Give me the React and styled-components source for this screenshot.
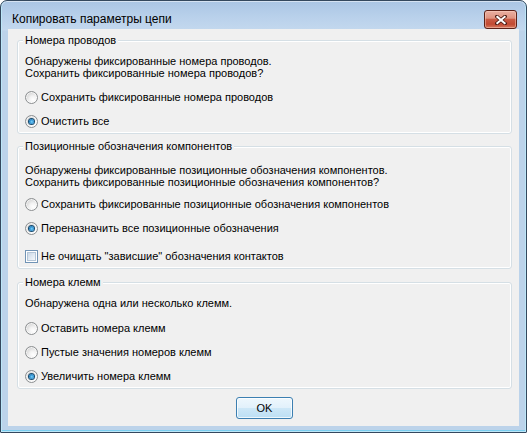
import React from 'react';
import styled, { createGlobalStyle } from 'styled-components';

const Global = createGlobalStyle`
  html, body { margin: 0; padding: 0; background: #ffffff; }
  body { width: 527px; height: 433px; overflow: hidden; }
  * { box-sizing: border-box; }
`;

const FONT = `"Liberation Sans", Arial, sans-serif`;

const Window = styled.div`
  width: 527px;
  height: 433px;
  border: 1px solid #34485e;
  border-radius: 7px 7px 1px 1px;
  background: linear-gradient(to bottom, #aac5e4 0px, #b9d1eb 16px, #c3d8ee 29px, #bcd3ea 30px, #bcd3ea 100%);
  box-shadow: inset 0 0 0 1px rgba(255, 255, 255, 0.5), inset 0 -1px 0 1px #79cdef;
  padding: 0 7px 7px 7px;
  display: flex;
  flex-direction: column;
  overflow: hidden;
`;

const TitleBar = styled.div`
  height: 29px;
  display: flex;
  align-items: flex-start;
  padding-left: 4px;
`;

const Title = styled.div`
  margin-top: 11px;
  font-family: ${FONT};
  font-size: 12px;
  line-height: 14px;
  color: #000;
`;

const CloseButton = styled.button`
  all: unset;
  width: 31px;
  height: 17px;
  margin: 9px 2px 0 auto;
  border: 1px solid #5b2117;
  border-radius: 3px;
  background: linear-gradient(to bottom, #eab0a2 0%, #df9380 42%, #c95a43 50%, #c24a32 78%, #d67a60 100%);
  box-shadow: inset 0 0 0 1px rgba(255, 215, 200, 0.45);
  display: flex;
  align-items: center;
  justify-content: center;
`;

const Client = styled.div`
  flex: 1;
  background: #f0f0f0;
  padding: 11px 7px 7px 9px;
  display: flex;
  flex-direction: column;
  font-family: ${FONT};
  font-size: 11px;
  color: #000;
`;

const Group = styled.div`
  border: 1px solid #d5dfe5;
  border-radius: 3px;
  box-shadow: inset 0 0 0 1px #ffffff;
  padding: 0 7px;
  display: flex;
  flex-direction: column;
  margin-top: ${(p) => p.$top || 0}px;
`;

const Legend = styled.div`
  align-self: flex-start;
  margin: -8px 0 0 -2px;
  padding: 0 2px;
  height: 14px;
  line-height: 14px;
  background: #f0f0f0;
`;

const Desc = styled.div`
  margin-top: ${(p) => p.$top}px;
  line-height: 12px;
`;

const Options = styled.div`
  margin-top: ${(p) => p.$top}px;
  display: flex;
  flex-direction: column;
`;

const Row = styled.label`
  height: 24px;
  display: flex;
  align-items: center;
  gap: 3px;
  line-height: 14px;
  margin-top: ${(p) => p.$top || 0}px;
`;

const RadioCircle = styled.span`
  width: 13px;
  height: 13px;
  border-radius: 50%;
  border: 1px solid #8c8f91;
  background: radial-gradient(circle at 65% 70%, #ffffff 0%, #f2f2f2 35%, #d0d0d0 80%, #c2c2c2 100%);
  box-shadow: inset 0 0 0 1px rgba(255, 255, 255, 0.7);
  display: flex;
  align-items: center;
  justify-content: center;
  flex: none;
`;

const RadioDot = styled.span`
  width: 5px;
  height: 5px;
  border-radius: 50%;
  background: radial-gradient(circle at 55% 55%, #7fd3fb 0%, #2a8fd0 50%, #0c4a7c 100%);
  box-shadow: 0 0 0 1px #174a6e;
`;

const CheckBox = styled.span`
  width: 13px;
  height: 13px;
  border: 1px solid #7093b5;
  background: #ffffff;
  padding: 1px;
  flex: none;
  display: flex;
`;

const CheckInner = styled.span`
  flex: 1;
  border: 1px solid #b3c5d7;
  background: linear-gradient(135deg, #cbd8e6 0%, #e4ecf4 60%, #f6f9fc 100%);
`;

const OkButton = styled.button`
  all: unset;
  align-self: center;
  margin-top: 8px;
  width: 55px;
  height: 20px;
  border: 1px solid #3c7fb1;
  border-radius: 3px;
  background: linear-gradient(to bottom, #eef7fd 0%, #e2f1fb 48%, #cde7f7 52%, #bcdff4 100%);
  box-shadow: inset 0 0 0 1px rgba(255, 255, 255, 0.75);
  font-family: ${FONT};
  font-size: 11px;
  line-height: 18px;
  text-align: center;
  color: #000;
`;

function Radio({ checked, children, top }) {
  return (
    <Row $top={top}>
      <RadioCircle>{checked && <RadioDot />}</RadioCircle>
      <span>{children}</span>
    </Row>
  );
}

function Check({ children, top }) {
  return (
    <Row $top={top}>
      <CheckBox>
        <CheckInner />
      </CheckBox>
      <span>{children}</span>
    </Row>
  );
}

function CloseGlyph() {
  return (
    <svg width="12" height="10" viewBox="0 0 12 10">
      <path d="M2 1.5 L10 8.5 M10 1.5 L2 8.5" stroke="#4a1a12" strokeWidth="3.6" strokeLinecap="square" />
      <path d="M2.3 1.8 L9.7 8.2 M9.7 1.8 L2.3 8.2" stroke="#ffffff" strokeWidth="2" strokeLinecap="square" />
    </svg>
  );
}

export default function App() {
  return (
    <>
      <Global />
      <Window>
        <TitleBar>
          <Title>Копировать параметры цепи</Title>
          <CloseButton aria-label="Закрыть">
            <CloseGlyph />
          </CloseButton>
        </TitleBar>
        <Client>
          <Group>
            <Legend>Номера проводов</Legend>
            <Desc $top={8}>
              Обнаружены фиксированные номера проводов.
              <br />
              Сохранить фиксированные номера проводов?
            </Desc>
            <Options $top={6}>
              <Radio>Сохранить фиксированные номера проводов</Radio>
              <Radio checked>Очистить все</Radio>
            </Options>
          </Group>

          <Group $top={12}>
            <Legend>Позиционные обозначения компонентов</Legend>
            <Desc $top={11}>
              Обнаружены фиксированные позиционные обозначения компонентов.
              <br />
              Сохранить фиксированные позиционные обозначения компонентов?
            </Desc>
            <Options $top={4}>
              <Radio>Сохранить фиксированные позиционные обозначения компонентов</Radio>
              <Radio checked>Переназначить все позиционные обозначения</Radio>
              <Check top={4}>Не очищать "зависшие" обозначения контактов</Check>
            </Options>
          </Group>

          <Group $top={13}>
            <Legend>Номера клемм</Legend>
            <Desc $top={8}>Обнаружена одна или несколько клемм.</Desc>
            <Options $top={7}>
              <Radio>Оставить номера клемм</Radio>
              <Radio>Пустые значения номеров клемм</Radio>
              <Radio checked>Увеличить номера клемм</Radio>
            </Options>
          </Group>

          <OkButton>OK</OkButton>
        </Client>
      </Window>
    </>
  );
}
